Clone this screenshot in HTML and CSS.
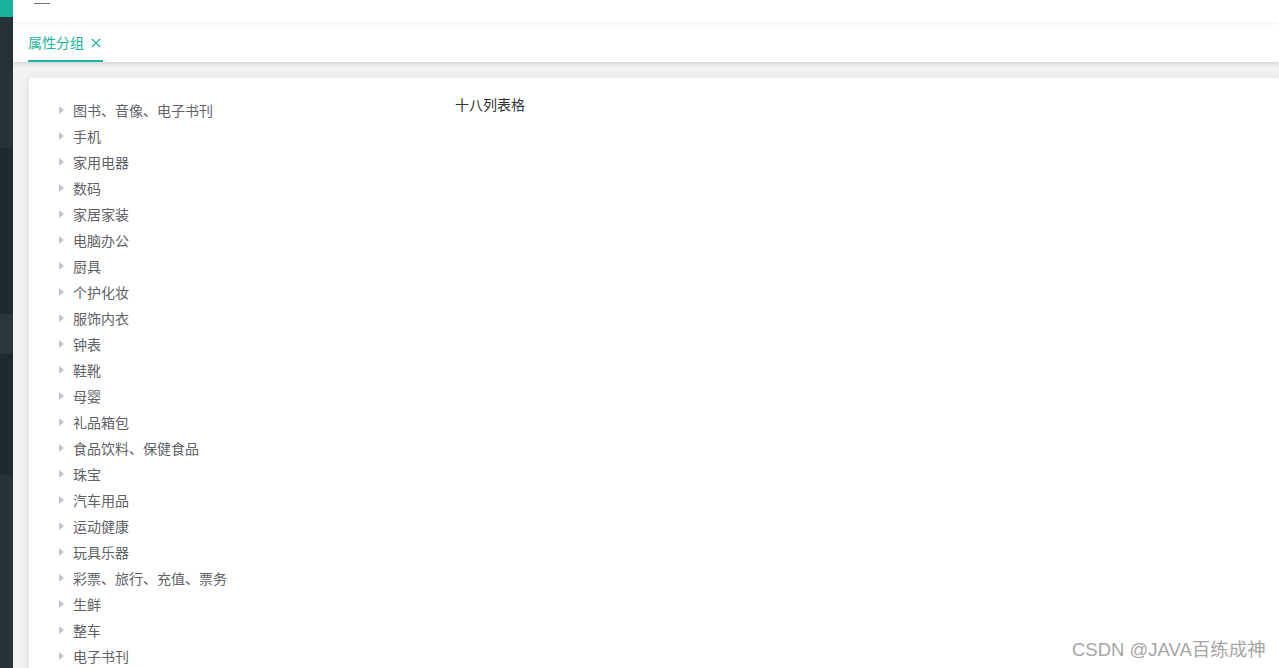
FILE: index.html
```html
<!DOCTYPE html>
<html lang="zh-CN">
<head>
  <meta charset="UTF-8">
  <title>属性分组</title>
  <link rel="stylesheet" href="styles.css">
</head>
<body>
  <div class="layout">
    <aside class="sidebar">
      <div class="side-logo"></div>
      <div class="side-block light menu-top"></div>
      <div class="side-block dark menu-open"></div>
      <div class="side-block active"></div>
      <div class="side-block dark menu-sub"></div>
      <div class="side-block light grow"></div>
    </aside>

    <div class="main">
      <header class="navbar">
        <span class="hamburger"></span>
      </header>

      <div class="tags">
        <div class="tag active">
          属性分组
          <svg class="tag-close" width="10" height="10" viewBox="0 0 10 10">
            <path d="M1 1 L9 9 M9 1 L1 9" stroke="currentColor" stroke-width="1.2" fill="none"/>
          </svg>
        </div>
      </div>

      <div class="content">
        <div class="card">
          <div class="tree-col">
            <ul class="tree" id="tree"></ul>
          </div>
          <div class="table-col">十八列表格</div>
        </div>
      </div>
    </div>
  </div>

  <div class="watermark">CSDN @JAVA百练成神</div>

  <script>
    var categories = [
      '图书、音像、电子书刊', '手机', '家用电器', '数码', '家居家装', '电脑办公',
      '厨具', '个护化妆', '服饰内衣', '钟表', '鞋靴', '母婴', '礼品箱包',
      '食品饮料、保健食品', '珠宝', '汽车用品', '运动健康', '玩具乐器',
      '彩票、旅行、充值、票务', '生鲜', '整车', '电子书刊'
    ];

    var tree = document.getElementById('tree');
    categories.forEach(function (name) {
      var li = document.createElement('li');
      li.className = 'tree-node';
      li.innerHTML = '<span class="caret"></span><span class="label">' + name + '</span>';
      tree.appendChild(li);
    });
  </script>
</body>
</html>
```

FILE: styles.css
```css
* {
  box-sizing: border-box;
}

html, body {
  margin: 0;
  height: 100%;
  overflow: hidden;
}

body {
  font-family: "Microsoft YaHei", "Noto Sans CJK SC", "Noto Sans", sans-serif;
  font-size: 14px;
  color: #606266;
  background: #fff;
}

.layout {
  display: flex;
  height: 100%;
}

.sidebar {
  width: 13px;
  flex-shrink: 0;
  display: flex;
  flex-direction: column;
  background: #263238;
}

.side-logo {
  height: 17px;
  background: #1ab39c;
}

.side-block.light {
  background: #263138;
}

.side-block.dark {
  background: #1f2a30;
}

.side-block.active {
  height: 40px;
  background: #2b353c;
}

.menu-top {
  height: 131px;
}

.menu-open {
  height: 166px;
}

.menu-sub {
  height: 121px;
}

.side-block.grow {
  flex: 1;
}

.main {
  flex: 1;
  display: flex;
  flex-direction: column;
  min-width: 0;
  background: #f0f2f4;
}

.navbar {
  height: 22px;
  background: #fff;
  position: relative;
  z-index: 2;
  box-shadow: 0 1px 4px rgba(0, 21, 41, 0.08);
  padding-left: 21px;
}

.hamburger {
  display: block;
  width: 16px;
  height: 1px;
  margin-top: 3px;
  background: #777;
}

.tags {
  height: 40px;
  background: #fff;
  padding-left: 15px;
  display: flex;
  position: relative;
  z-index: 1;
  box-shadow: 0 2px 4px rgba(0, 0, 0, 0.12);
}

.tag {
  display: flex;
  align-items: center;
  height: 40px;
  font-size: 14px;
  color: #1ab39c;
  border-bottom: 2px solid #1ab39c;
  padding-top: 2px;
  gap: 7px;
}

.tag-close {
  margin-top: 1px;
  margin-right: 2px;
}

.content {
  flex: 1;
  padding: 16px 0 0 16px;
  overflow: hidden;
}

.card {
  display: flex;
  background: #fff;
  border-radius: 4px 0 0 0;
  box-shadow: 0 2px 12px rgba(0, 0, 0, 0.1);
  padding: 19px 20px 20px;
  min-height: 700px;
}

.tree-col {
  width: 406px;
  flex-shrink: 0;
}

.tree {
  list-style: none;
  margin: 0;
  padding: 0;
}

.tree-node {
  display: flex;
  align-items: center;
  height: 26px;
}

.caret {
  width: 0;
  height: 0;
  margin: 0 9px 0 10px;
  border-top: 4px solid transparent;
  border-bottom: 4px solid transparent;
  border-left: 5px solid #c0c4cc;
}

.label {
  color: #606266;
}

.table-col {
  color: #303133;
  line-height: 14px;
}

.watermark {
  position: absolute;
  left: 1072px;
  top: 635px;
  font-family: "Liberation Sans", "Noto Sans CJK SC", sans-serif;
  font-size: 18.5px;
  color: #a6a6a6;
  text-shadow: 0 0 1px #fff;
}
```
